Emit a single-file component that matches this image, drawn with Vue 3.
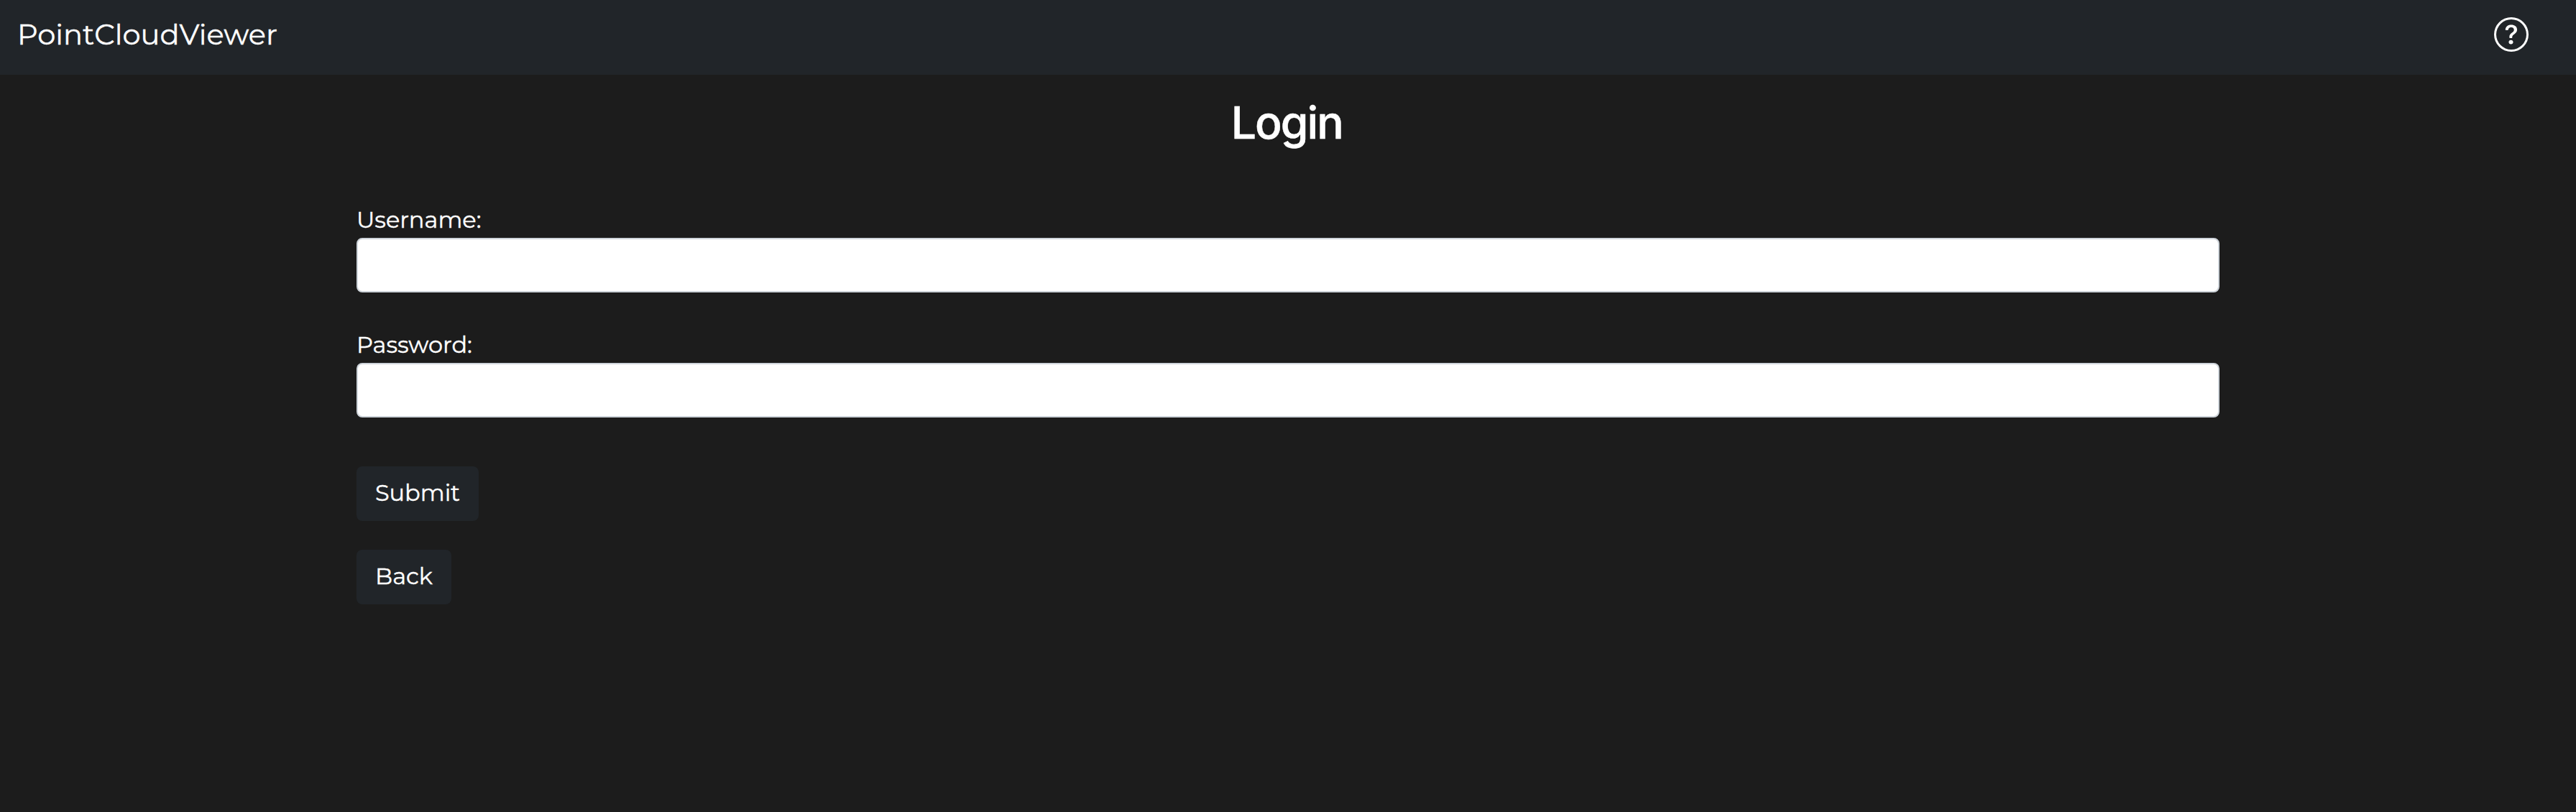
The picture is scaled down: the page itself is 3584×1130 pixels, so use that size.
<script setup>
const fields = [
  { id: 'username', label: 'Username:', type: 'text' },
  { id: 'password', label: 'Password:', type: 'password' },
]
</script>

<template>
  <div class="page">
    <nav class="navbar">
      <span class="brand">PointCloudViewer</span>
      <svg class="help" viewBox="0 0 16 16" fill="#fff" aria-label="Help">
        <path d="M8 15A7 7 0 1 1 8 1a7 7 0 0 1 0 14zm0 1A8 8 0 1 0 8 0a8 8 0 0 0 0 16z" />
        <path d="M5.255 5.786a.237.237 0 0 0 .241.247h.825c.138 0 .248-.113.266-.25.09-.656.54-1.134 1.342-1.134.686 0 1.314.343 1.314 1.168 0 .635-.374.927-.965 1.371-.673.489-1.206 1.06-1.168 1.987l.003.217a.25.25 0 0 0 .25.246h.811a.25.25 0 0 0 .25-.25v-.105c0-.718.273-.927 1.01-1.486.609-.463 1.244-.977 1.244-2.056 0-1.511-1.276-2.241-2.673-2.241-1.267 0-2.655.59-2.75 2.286zm1.557 5.763c0 .533.425.927 1.01.927.609 0 1.028-.394 1.028-.927 0-.552-.42-.94-1.029-.94-.584 0-1.009.388-1.009.94z" />
      </svg>
    </nav>
    <h1>Login</h1>
    <form class="container" @submit.prevent>
      <div v-for="f in fields" :key="f.id" class="field">
        <label :for="f.id">{{ f.label }}</label>
        <input :id="f.id" :type="f.type">
      </div>
      <button class="submit" type="submit"><span>Submit</span></button>
      <button class="back" type="button"><span>Back</span></button>
    </form>
  </div>
</template>

<style>
body { background: #1c1c1c; }
</style>

<style scoped>
.page {
  box-sizing: border-box;
  height: 1130px;
  overflow: hidden;
  background: #1c1c1c;
  color: #fff;
  font-family: Montserrat, Inter, sans-serif;
  font-size: 32px;
  -webkit-text-stroke: 0.4px #fff;
}
.navbar {
  box-sizing: border-box;
  display: flex;
  justify-content: space-between;
  align-items: flex-start;
  height: 104px;
  padding: 24px 66px 0 24px;
  background: #212529;
}
.brand {
  font-size: 40px;
  line-height: 48px;
}
.help { width: 48px; height: 48px; }
h1 {
  margin: 28px 0 0;
  font: 500 62.5px/77px Inter, sans-serif;
  letter-spacing: -2px;
  text-indent: -3.5px;
  text-align: center;
  -webkit-text-stroke: 0.5px #fff;
}
.container {
  display: flex;
  flex-direction: column;
  align-items: flex-start;
  width: 2592px;
  margin: 74px auto 0;
}
.field { width: 100%; margin-bottom: 50px; }
label {
  display: block;
  height: 48px;
  line-height: 46px;
}
input {
  display: block;
  box-sizing: border-box;
  width: 100%;
  height: 76px;
  margin: 0;
  padding: 12px 24px;
  border: 2px solid #ced4da;
  border-radius: 8px;
  background: #fff;
}
button {
  box-sizing: border-box;
  height: 76px;
  padding: 0 0 3px;
  border: 0;
  border-radius: 8px;
  background: #212529;
  color: #fff;
  font: inherit;
}
.submit { width: 170px; margin-top: 18px; }
.back { width: 132px; margin-top: 40px; }
</style>
